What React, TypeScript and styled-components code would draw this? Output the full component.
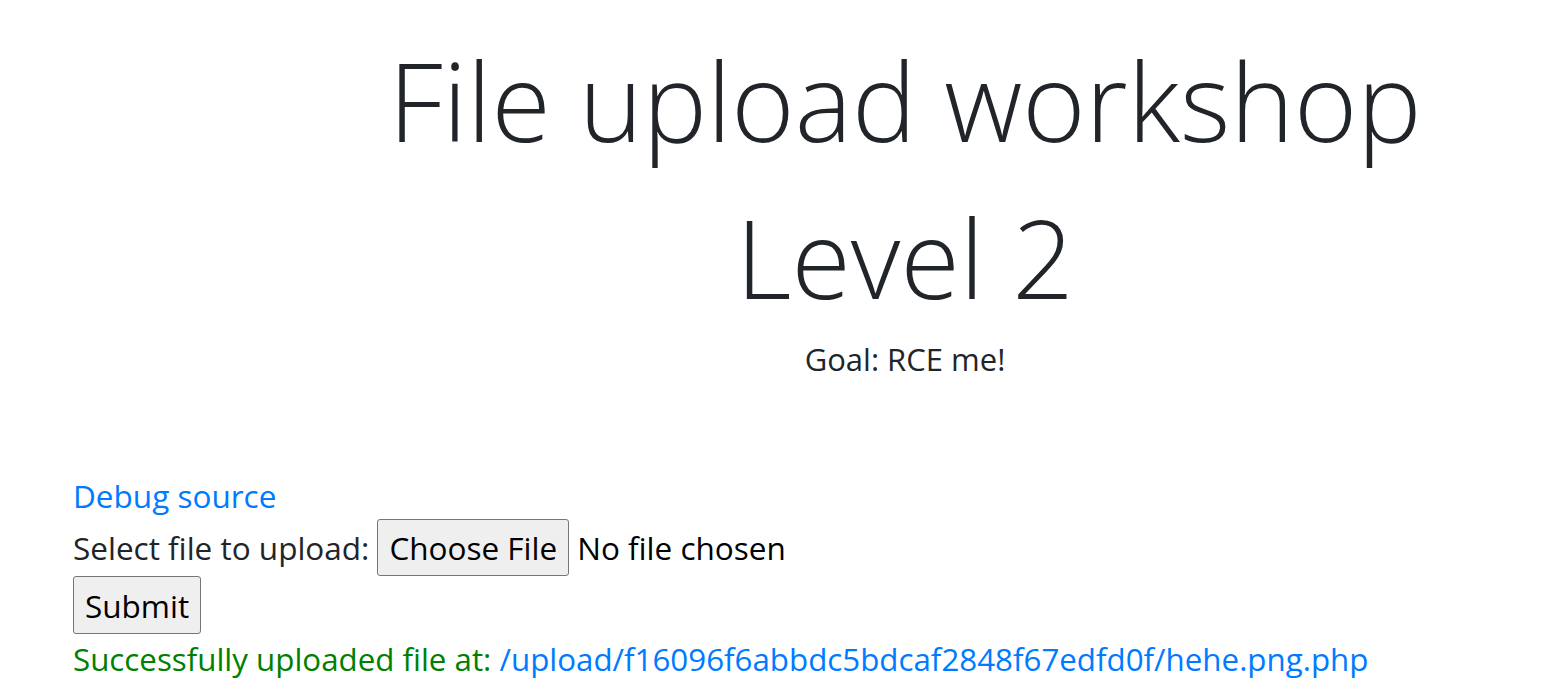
import React from "react";
import styled, { createGlobalStyle } from "styled-components";

const Global = createGlobalStyle`
  html, body { margin: 0; padding: 0; background: #fff; }
  body {
    font-family: "Open Sans", "Noto Sans", "Liberation Sans", sans-serif;
    color: #212529;
    font-size: 31.5px;
    line-height: 1.5;
  }
`;

const Page = styled.div`
  display: flex;
  flex-direction: column;
  padding: 0 0 0 73px;
`;

const Hero = styled.header`
  display: flex;
  flex-direction: column;
  align-items: center;
  padding-left: 186px;
  padding-top: 22px;
`;

const Title = styled.h1`
  margin: 0;
  font-weight: 300;
  font-size: 108px;
  line-height: 157px;
  text-align: center;
  color: #212529;
`;

const Goal = styled.p`
  margin: 2px 0 0;
  font-size: 31px;
  line-height: 42px;
`;

const Content = styled.main`
  display: flex;
  flex-direction: column;
  margin-top: 92px;
`;

const Link = styled.a`
  color: #007bff;
  text-decoration: none;
`;

const UploadForm = styled.form`
  display: flex;
  flex-direction: column;
  align-items: flex-start;
`;

const Row = styled.div`
  display: flex;
  align-items: center;
  gap: 8px;
`;

const FileInput = styled.input`
  font-family: inherit;
  font-size: 31.5px;
  color: #000;
  &::file-selector-button {
    font-family: inherit;
    font-size: 31.5px;
    color: #000;
    background: #efefef;
    border: 1px solid #767676;
    border-radius: 3px;
    height: 57px;
    padding: 0 11px;
    margin-right: 8px;
  }
`;

const Button = styled.button`
  font-family: inherit;
  font-size: 31.5px;
  color: #000;
  background: #efefef;
  border: 1px solid #767676;
  border-radius: 3px;
  height: 58px;
  padding: 0 11px;
`;

const Status = styled.div`
  color: #008000;
  font-size: 31.3px;
  margin-top: 2px;
`;

export default function App() {
  return (
    <>
      <Global />
      <Page>
        <Hero>
          <Title>
            File upload workshop
            <br />
            Level 2
          </Title>
          <Goal>Goal: RCE me!</Goal>
        </Hero>
        <Content>
          <Link href="#">Debug source</Link>
          <UploadForm>
            <Row>
              <span>Select file to upload:</span>
              <FileInput type="file" name="file" />
            </Row>
            <Button type="submit">Submit</Button>
          </UploadForm>
          <Status>
            Successfully uploaded file at:{" "}
            <Link href="#">/upload/f16096f6abbdc5bdcaf2848f67edfd0f/hehe.png.php</Link>
          </Status>
        </Content>
      </Page>
    </>
  );
}
